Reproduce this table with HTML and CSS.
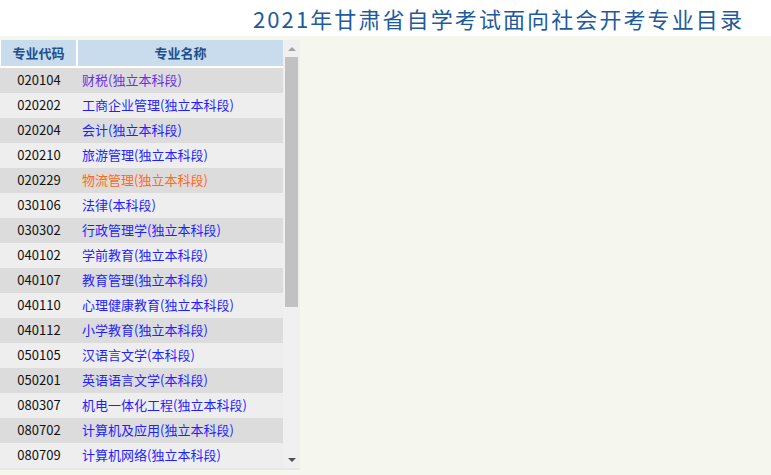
FILE: index.html
```html
<!DOCTYPE html>
<html lang="zh">
<head>
<meta charset="utf-8">
<title>2021年甘肃省自学考试面向社会开考专业目录</title>
<link rel="stylesheet" href="styles.css">
</head>
<body>
<header class="top">
  <h1 class="title">2021年甘肃省自学考试面向社会开考专业目录</h1>
</header>
<main class="main">
  <div class="panel">
    <div class="list">
      <table class="majors">
        <thead>
          <tr><th class="c-code">专业代码</th><th class="c-name">专业名称</th></tr>
        </thead>
        <tbody>
          <tr><td class="code">020104</td><td class="name"><a class="visited" href="#">财税(独立本科段)</a></td></tr>
          <tr><td class="code">020202</td><td class="name"><a href="#">工商企业管理(独立本科段)</a></td></tr>
          <tr><td class="code">020204</td><td class="name"><a href="#">会计(独立本科段)</a></td></tr>
          <tr><td class="code">020210</td><td class="name"><a href="#">旅游管理(独立本科段)</a></td></tr>
          <tr><td class="code">020229</td><td class="name"><a class="hover" href="#">物流管理(独立本科段)</a></td></tr>
          <tr><td class="code">030106</td><td class="name"><a href="#">法律(本科段)</a></td></tr>
          <tr><td class="code">030302</td><td class="name"><a href="#">行政管理学(独立本科段)</a></td></tr>
          <tr><td class="code">040102</td><td class="name"><a href="#">学前教育(独立本科段)</a></td></tr>
          <tr><td class="code">040107</td><td class="name"><a href="#">教育管理(独立本科段)</a></td></tr>
          <tr><td class="code">040110</td><td class="name"><a href="#">心理健康教育(独立本科段)</a></td></tr>
          <tr><td class="code">040112</td><td class="name"><a href="#">小学教育(独立本科段)</a></td></tr>
          <tr><td class="code">050105</td><td class="name"><a href="#">汉语言文学(本科段)</a></td></tr>
          <tr><td class="code">050201</td><td class="name"><a href="#">英语语言文学(本科段)</a></td></tr>
          <tr><td class="code">080307</td><td class="name"><a href="#">机电一体化工程(独立本科段)</a></td></tr>
          <tr><td class="code">080702</td><td class="name"><a href="#">计算机及应用(独立本科段)</a></td></tr>
          <tr><td class="code">080709</td><td class="name"><a href="#">计算机网络(独立本科段)</a></td></tr>
        </tbody>
      </table>
    </div>
    <div class="scrollbar">
      <div class="arrow up"></div>
      <div class="track"><div class="thumb"></div></div>
      <div class="arrow down"></div>
    </div>
  </div>
</main>
</body>
</html>
```

FILE: styles.css
```css
html, body {
  margin: 0;
  padding: 0;
}
body {
  background: #f5f7ef;
  font-family: "Noto Sans CJK SC", "Noto Sans", sans-serif;
  width: 771px;
  height: 475px;
  overflow: hidden;
}
.top {
  background: #ffffff;
  height: 36px;
  display: flex;
  justify-content: flex-end;
  align-items: center;
  padding-right: 27px;
}
.title {
  margin: 0;
  font-weight: normal;
  font-size: 22px;
  line-height: 34px;
  color: #1f5b9a;
  letter-spacing: 2.1px;
}
.main {
  padding-top: 4px;
}
.panel {
  display: flex;
  width: 300px;
  height: 428px;
  overflow: hidden;
  background: #ffffff;
  border-bottom: 2px solid #e8e8e8;
}
.list {
  width: 283px;
  height: 428px;
  overflow: hidden;
}
.majors {
  width: 283px;
  border-collapse: separate;
  border-spacing: 0;
  table-layout: fixed;
  font-size: 13px;
}
.majors th {
  background: #c9dcee;
  color: #1c4f8c;
  font-weight: bold;
  height: 25px;
  line-height: 25px;
  padding: 0 0 1px 0;
  text-align: center;
  border-bottom: 2px solid #ffffff;
  box-sizing: content-box;
}
.majors th.c-code {
  width: 75px;
  border-left: 1px solid #ffffff;
  border-right: 2px solid #ffffff;
}
.majors td {
  height: 24px;
  padding: 0 0 1px 0;
  line-height: 24px;
  overflow: hidden;
  white-space: nowrap;
}
.majors tbody tr:nth-child(odd) td {
  background: #dcdcdc;
}
.majors tbody tr:nth-child(even) td {
  background: #eeeeee;
}
.code {
  text-align: center;
  color: #111111;
}
.majors td.name {
  padding-left: 4px;
}
.name a {
  color: #1f1fff;
  text-decoration: none;
}
.name a.visited {
  color: #6a30e6;
}
.name a.hover {
  color: #ff6a1a;
}
.scrollbar {
  width: 17px;
  height: 428px;
  background: #f0f0f0;
  display: flex;
  flex-direction: column;
}
.arrow {
  height: 17px;
  display: flex;
  justify-content: center;
  align-items: center;
}
.arrow::before {
  content: "";
  width: 0;
  height: 0;
  border-left: 4px solid transparent;
  border-right: 4px solid transparent;
}
.arrow.up::before {
  border-bottom: 4px solid #a3a3a3;
}
.arrow.down::before {
  border-top: 4px solid #505050;
}
.track {
  flex: 1;
  display: flex;
  justify-content: center;
}
.thumb {
  width: 13px;
  height: 250px;
  background: #c1c1c1;
}
```
